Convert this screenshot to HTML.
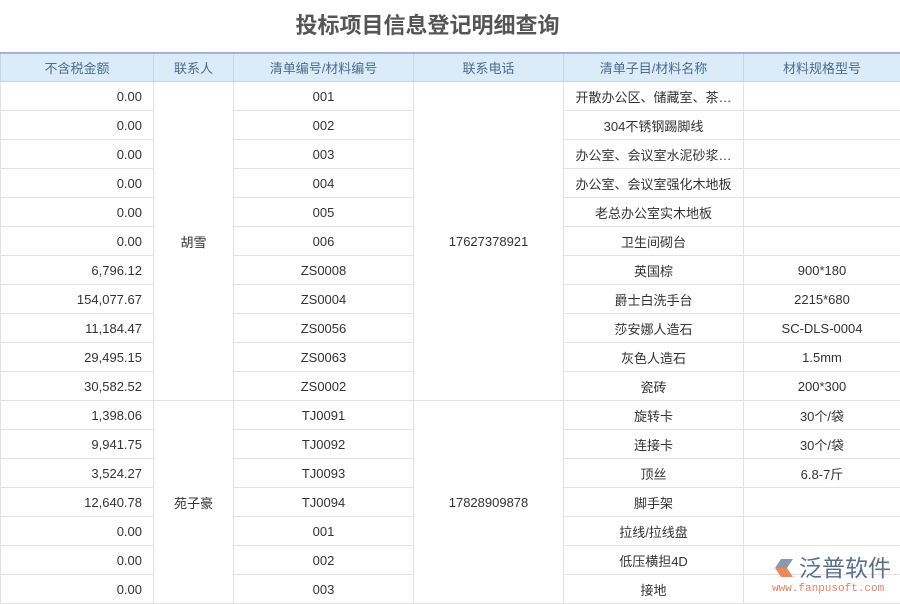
<!DOCTYPE html><html><head><meta charset="utf-8"><style>
body{margin:0;width:900px;height:600px;overflow:hidden;background:#fff;font-family:"Liberation Sans","Noto Sans CJK SC",sans-serif;position:relative}
.t{position:absolute;top:10px;left:0;width:855px;text-align:center;font-size:22px;font-weight:bold;color:#555;line-height:32px}
table{position:absolute;top:52px;left:0;border-collapse:collapse;table-layout:fixed;width:900px;font-size:13px;color:#333}
th{background:#dcebf8;color:#4a6d8c;font-weight:normal;height:27px;padding:0;border:1px solid #c4d6e6;border-top:2px solid #9ab8d2}
td{height:28px;border:1px solid #e2e2e2;text-align:center;padding:0;background:#fff}
td.a{text-align:right;padding-right:11px}
.logo{position:absolute;left:770px;top:552px;width:130px;height:48px}
</style></head><body>
<div class="t">投标项目信息登记明细查询</div>
<table>
<colgroup><col style="width:153px"><col style="width:80px"><col style="width:180px"><col style="width:150px"><col style="width:180px"><col style="width:157px"></colgroup>
<tr><th>不含税金额</th><th>联系人</th><th>清单编号/材料编号</th><th>联系电话</th><th>清单子目/材料名称</th><th>材料规格型号</th></tr>
<tr><td class="a">0.00</td><td rowspan="11">胡雪</td><td>001</td><td rowspan="11">17627378921</td><td>开散办公区、储藏室、茶…</td><td></td></tr>
<tr><td class="a">0.00</td><td>002</td><td>304不锈钢踢脚线</td><td></td></tr>
<tr><td class="a">0.00</td><td>003</td><td>办公室、会议室水泥砂浆…</td><td></td></tr>
<tr><td class="a">0.00</td><td>004</td><td>办公室、会议室强化木地板</td><td></td></tr>
<tr><td class="a">0.00</td><td>005</td><td>老总办公室实木地板</td><td></td></tr>
<tr><td class="a">0.00</td><td>006</td><td>卫生间砌台</td><td></td></tr>
<tr><td class="a">6,796.12</td><td>ZS0008</td><td>英国棕</td><td>900*180</td></tr>
<tr><td class="a">154,077.67</td><td>ZS0004</td><td>爵士白洗手台</td><td>2215*680</td></tr>
<tr><td class="a">11,184.47</td><td>ZS0056</td><td>莎安娜人造石</td><td>SC-DLS-0004</td></tr>
<tr><td class="a">29,495.15</td><td>ZS0063</td><td>灰色人造石</td><td>1.5mm</td></tr>
<tr><td class="a">30,582.52</td><td>ZS0002</td><td>瓷砖</td><td>200*300</td></tr>
<tr><td class="a">1,398.06</td><td rowspan="7">苑子豪</td><td>TJ0091</td><td rowspan="7">17828909878</td><td>旋转卡</td><td>30个/袋</td></tr>
<tr><td class="a">9,941.75</td><td>TJ0092</td><td>连接卡</td><td>30个/袋</td></tr>
<tr><td class="a">3,524.27</td><td>TJ0093</td><td>顶丝</td><td>6.8-7斤</td></tr>
<tr><td class="a">12,640.78</td><td>TJ0094</td><td>脚手架</td><td></td></tr>
<tr><td class="a">0.00</td><td>001</td><td>拉线/拉线盘</td><td></td></tr>
<tr><td class="a">0.00</td><td>002</td><td>低压横担4D</td><td></td></tr>
<tr><td class="a">0.00</td><td>003</td><td>接地</td><td></td></tr>
</table>
<div class="logo">
<svg width="24" height="24" style="position:absolute;left:3px;top:4px" viewBox="0 0 24 24"><path d="M2 12 L8 3 L20 3 L14 12Z" fill="#8a9bb0"/><path d="M2 12 L14 12 L20 21 L8 21Z" fill="#e98a55"/></svg>
<div style="position:absolute;left:29px;top:1px;font-size:23px;line-height:30px;color:#5a6f8a;white-space:nowrap">泛普软件</div>
<div style="position:absolute;left:2px;top:31px;font-size:11px;color:#d9856a;font-family:'Liberation Mono',monospace;white-space:nowrap">www.fanpusoft.com</div>
</div>
</body></html>
